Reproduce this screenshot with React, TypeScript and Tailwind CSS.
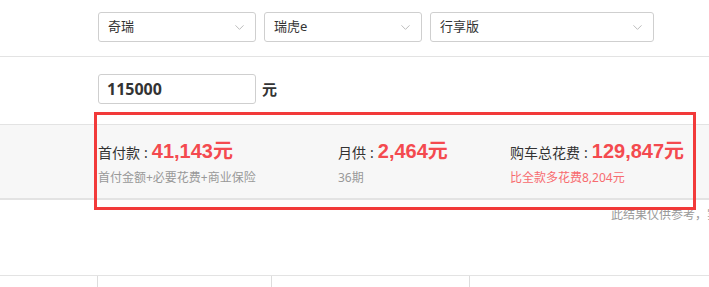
import { ChevronDown } from "lucide-react";

const font = { fontFamily: '"Noto Sans", "Noto Sans CJK SC", sans-serif' };
const numFont = { fontFamily: '"Liberation Sans", "Noto Sans CJK SC", sans-serif' };

function Select({ label, width }: { label: string; width: string }) {
  return (
    <div
      className={`${width} h-[30px] flex items-center justify-between pl-[9px] pr-[8px] border border-[#cfcfcf] rounded-[3px] bg-white`}
    >
      <span className="text-[13px] text-[#333]">{label}</span>
      <ChevronDown className="w-[15px] h-[15px] text-[#b8b8b8]" strokeWidth={1.5} />
    </div>
  );
}

function Item({
  label,
  value,
  note,
  noteClass,
  width,
}: {
  label: string;
  value: string;
  note: string;
  noteClass: string;
  width: string;
}) {
  return (
    <div className={`${width} shrink-0`}>
      <div className="flex items-baseline h-[24px]">
        <span className="text-[14px] text-[#333]">{label}</span>
        <span className="text-[14px] text-[#333] px-[4px]">:</span>
        <span className="text-[20px] font-bold text-[#f44a4f] leading-none" style={numFont}>
          {value}
        </span>
      </div>
      <div className={`mt-[4px] text-[12px] leading-[18px] ${noteClass}`}>{note}</div>
    </div>
  );
}

export default function App() {
  return (
    <div className="relative w-[709px] h-[287px] overflow-hidden bg-white" style={font}>
      {/* car selects */}
      <div className="h-[57px] border-b border-[#e3e3e3] pt-[12px] pl-[98px] flex gap-[8px]">
        <Select label="奇瑞" width="w-[158px]" />
        <Select label="瑞虎e" width="w-[158px]" />
        <Select label="行享版" width="w-[224px]" />
      </div>

      {/* price input */}
      <div className="h-[67px] pt-[17px] pl-[98px] flex items-start gap-[6px]">
        <div className="w-[158px] h-[30px] border border-[#cfcfcf] rounded-[3px] flex items-center pl-[8px]">
          <span className="text-[16px] font-bold text-[#333]">115000</span>
        </div>
        <span className="text-[15px] font-bold text-[#333] leading-[30px]">元</span>
      </div>

      {/* result band */}
      <div className="h-[76px] border-t border-b-2 border-[#e3e3e3] bg-[#f7f7f7] pt-[16px] pl-[98px] flex">
        <Item
          label="首付款"
          value="41,143元"
          note="首付金额+必要花费+商业保险"
          noteClass="text-[#999]"
          width="w-[240px]"
        />
        <Item label="月供" value="2,464元" note="36期" noteClass="text-[#999]" width="w-[172px]" />
        <Item
          label="购车总花费"
          value="129,847元"
          note="比全款多花费8,204元"
          noteClass="text-[#f76b6f]"
          width="w-[200px]"
        />
      </div>

      <div className="pl-[611px] pt-[6px] whitespace-nowrap text-[12px] leading-[18px] text-[#999]">
        此结果仅供参考，实际应缴费以当地为准
      </div>

      {/* table head */}
      <div className="absolute left-0 right-0 top-[275px] h-[12px] border-t border-[#e3e3e3] flex">
        <div className="w-[98px] border-r border-[#ddd]" />
        <div className="w-[174px] border-r border-[#ddd]" />
        <div className="w-[198px] border-r border-[#ddd]" />
      </div>

      {/* annotation */}
      <div className="absolute left-[94px] top-[112px] w-[602px] h-[98px] border-[3px] border-[#f23a3a]" />
    </div>
  );
}
